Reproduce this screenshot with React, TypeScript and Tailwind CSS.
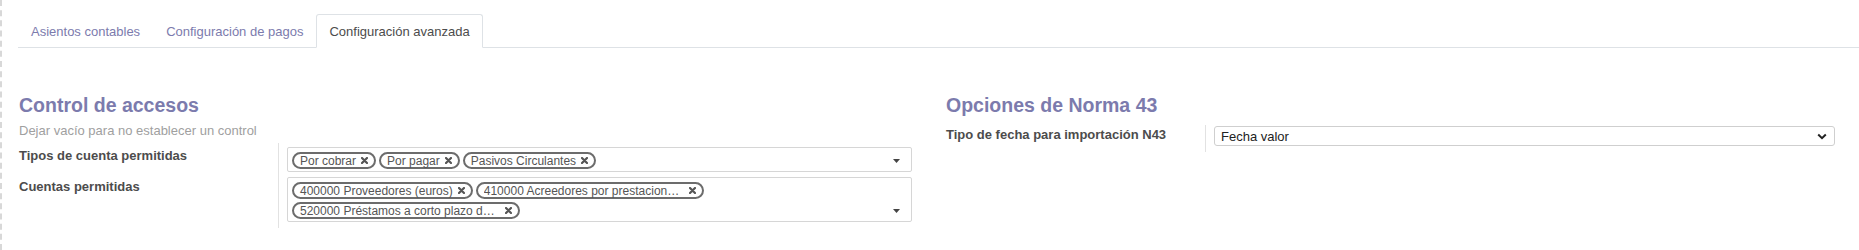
import React from 'react';

const tabs = [
  {label: 'Asientos contables', active: false},
  {label: 'Configuración de pagos', active: false},
  {label: 'Configuración avanzada', active: true},
];

function XMark() {
  return (
    <svg width="7" height="7" viewBox="0 0 7 7" className="shrink-0">
      <path
        d="M1 1 L6 6 M6 1 L1 6"
        stroke="#555"
        strokeWidth="2.2"
        strokeLinecap="round"
      />
    </svg>
  );
}

function Tag({label, truncate}: {label: string; truncate?: boolean}) {
  return (
    <span className="inline-flex h-[17px] items-center gap-[5px] rounded-full border-2 border-[#6c6c6c] px-[6px] text-[12px] leading-none text-[#555]">
      <span className={truncate ? 'w-[200px] truncate leading-[14px]' : 'leading-[14px]'}>
        {label}
      </span>
      <XMark />
    </span>
  );
}

function Caret() {
  return (
    <svg width="7" height="4" viewBox="0 0 7 4" className="mb-[8px] mr-[11px] shrink-0 self-end">
      <polygon points="0,0 7,0 3.5,4" fill="#444" />
    </svg>
  );
}

function TagBox({tags, wide}: {tags: {label: string; truncate?: boolean}[]; wide?: boolean}) {
  return (
    <div
      className={
        'flex w-full rounded-[2px] border border-[#d6d6d6] bg-white ' +
        (wide ? 'h-[45px]' : 'h-[25px]')
      }
    >
      <div className="flex flex-1 flex-wrap content-start gap-x-[3px] gap-y-[3px] pl-[4px] pt-[4px]">
        {tags.map((t) => (
          <Tag key={t.label} label={t.label} truncate={t.truncate} />
        ))}
      </div>
      <Caret />
    </div>
  );
}

export default function App() {
  return (
    <div className="min-h-[250px] w-full border-l-2 border-dashed border-[#d8d8d8] bg-white font-['Liberation_Sans',Arial,sans-serif] text-[13px] text-[#4c4c4c]">
      {/* Tabs */}
      <div className="pl-[16px] pt-[14px]">
        <div className="flex border-b border-[#dee2e6]">
          {tabs.map((t) => (
            <div
              key={t.label}
              className={
                '-mb-px flex h-[34px] items-center rounded-t-[3px] border px-[12px] leading-[15px] ' +
                (t.active
                  ? 'border-[#dee2e6] border-b-white bg-white text-[#4c4c4c]'
                  : 'border-transparent text-[#7c7bad]')
              }
            >
              {t.label}
            </div>
          ))}
        </div>
      </div>

      {/* Content */}
      <div className="grid grid-cols-[893px_1fr] gap-[34px] pl-[17px] pr-[24px] pt-[45px]">
        {/* Left column */}
        <div>
          <h2 className="text-[19.5px] font-bold leading-[24px] text-[#7c7bad]">
            Control de accesos
          </h2>
          <div className="mt-[6px] leading-[15px] text-[#a0a0a0]">
            Dejar vacío para no establecer un control
          </div>
          <div className="mt-[5px]">
            <div className="flex">
              <div className="w-[260px] shrink-0 border-r border-[#e2e2e2] pt-[5px] font-bold leading-[15px]">
                Tipos de cuenta permitidas
              </div>
              <div className="flex-1 pb-[2px] pl-[8px] pt-[4px]">
                <TagBox
                  tags={[
                    {label: 'Por cobrar'},
                    {label: 'Por pagar'},
                    {label: 'Pasivos Circulantes'},
                  ]}
                />
              </div>
            </div>
            <div className="flex">
              <div className="w-[260px] shrink-0 border-r border-[#e2e2e2] pt-[5px] font-bold leading-[15px]">
                Cuentas permitidas
              </div>
              <div className="flex-1 pb-[6px] pl-[8px] pt-[3px]">
                <TagBox
                  wide
                  tags={[
                    {label: '400000 Proveedores (euros)'},
                    {
                      label: '410000 Acreedores por prestaciones de servicios (euros)',
                      truncate: true,
                    },
                    {
                      label: '520000 Préstamos a corto plazo de entidades de crédito',
                      truncate: true,
                    },
                  ]}
                />
              </div>
            </div>
          </div>
        </div>

        {/* Right column */}
        <div>
          <h2 className="text-[19.5px] font-bold leading-[24px] text-[#7c7bad]">
            Opciones de Norma 43
          </h2>
          <div className="mt-[8px] flex">
            <div className="w-[260px] shrink-0 border-r border-[#e2e2e2] pb-[10px] pt-[2px] font-bold leading-[15px]">
              Tipo de fecha para importación N43
            </div>
            <div className="flex-1 pl-[8px] pt-[1px]">
              <div className="flex h-[20px] items-center justify-between rounded-[3px] border border-[#cfcfcf] bg-white pl-[6px] pr-[7px] text-[#222]">
                <span className="leading-[15px]">Fecha valor</span>
                <svg width="10" height="7" viewBox="0 0 10 7">
                  <polyline
                    points="1.2,1.5 5,5.2 8.8,1.5"
                    fill="none"
                    stroke="#222"
                    strokeWidth="2"
                  />
                </svg>
              </div>
            </div>
          </div>
        </div>
      </div>
    </div>
  );
}
